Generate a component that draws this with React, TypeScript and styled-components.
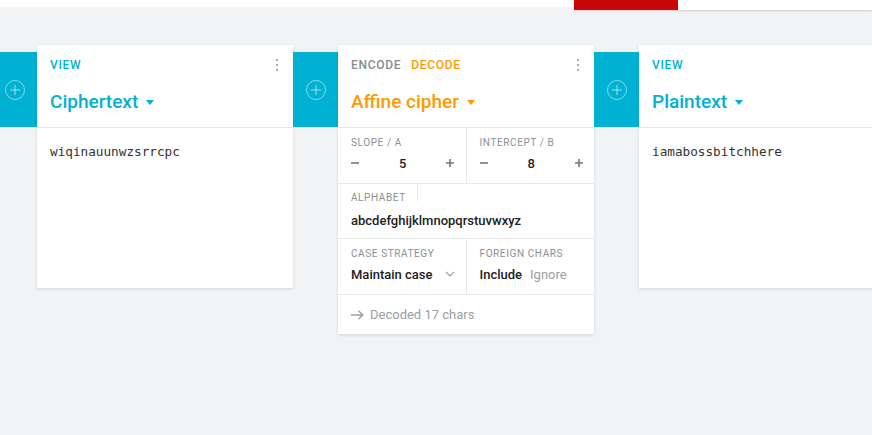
import React from "react";
import styled, { createGlobalStyle } from "styled-components";

const TEAL = "#00b1d3";
const ORANGE = "#ff9a00";
const LINE = "#e6e8ea";

const GlobalStyle = createGlobalStyle`
  html, body { margin: 0; padding: 0; background: #f2f3f5; overflow: hidden; }
  body { font-family: Roboto, "Noto Sans", sans-serif; -webkit-font-smoothing: antialiased; }
`;

const Page = styled.div`
  width: 872px;
  height: 435px;
  overflow: hidden;
  background: #f2f3f5;
  display: flex;
  flex-direction: column;
`;

const TopBar = styled.div`
  height: 7px;
  flex-shrink: 0;
  background: #fff;
  display: flex;
  justify-content: flex-end;
  align-items: flex-start;
  position: relative;
  z-index: 2;
`;

const TopRight = styled.div`
  width: 298px;
  height: 10px;
  background: #fff;
  box-shadow: 0 1px 2px rgba(0, 0, 0, 0.15);
  display: flex;
`;

const RedTab = styled.div`
  width: 104px;
  height: 10px;
  background: #c80606;
`;

const Pipeline = styled.div`
  display: flex;
  align-items: flex-start;
  padding-top: 38px;
  margin-left: -8px;
`;

const Column = styled.div`
  display: flex;
  align-items: flex-start;
  flex-shrink: 0;
`;

const Strip = styled.div`
  width: 45px;
  height: 75px;
  margin-top: 7px;
  background: ${TEAL};
  display: flex;
  align-items: center;
  justify-content: center;
`;

const Card = styled.div`
  width: 256px;
  flex-shrink: 0;
  background: #fff;
  box-shadow: 0 1px 3px rgba(0, 0, 0, 0.13);
`;

const Header = styled.div`
  height: 83px;
  box-sizing: border-box;
  padding: 12px 13px 0;
  border-bottom: 1px solid ${LINE};
`;

const TabsRow = styled.div`
  height: 16px;
  display: flex;
  align-items: center;
  justify-content: space-between;
`;

const Tabs = styled.div`
  display: flex;
  gap: 10px;
`;

const Tab = styled.span<{ $color: string }>`
  font-size: 12px;
  font-weight: 500;
  letter-spacing: 0.7px;
  line-height: 16px;
  color: ${(p) => p.$color};
`;

const Kebab = styled.div`
  display: flex;
  flex-direction: column;
  gap: 2.5px;
  padding-right: 2px;
  span {
    width: 2.5px;
    height: 2.5px;
    border-radius: 50%;
    background: #8a8f94;
  }
`;

const Title = styled.div<{ $color: string }>`
  margin-top: 16px;
  display: flex;
  align-items: center;
  gap: 8px;
  font-size: 19px;
  font-weight: 500;
  line-height: 26px;
  color: ${(p) => p.$color};
`;

const Caret = styled.span<{ $color: string }>`
  width: 0;
  height: 0;
  border-left: 4.5px solid transparent;
  border-right: 4.5px solid transparent;
  border-top: 5px solid ${(p) => p.$color};
`;

const TextBody = styled.div`
  height: 160px;
  box-sizing: border-box;
  padding: 14px 13px;
  font-family: "DejaVu Sans Mono", "Liberation Mono", monospace;
  font-size: 12.7px;
  line-height: 20px;
  color: #333;
`;

const FieldRow = styled.div`
  display: flex;
  border-bottom: 1px solid ${LINE};
`;

const Field = styled.div<{ $divider?: boolean }>`
  flex: 1;
  min-width: 0;
  box-sizing: border-box;
  padding: 9px 11px 10px 13px;
  border-right: ${(p) => (p.$divider ? `1px solid ${LINE}` : "none")};
`;

const Label = styled.div`
  font-size: 10px;
  line-height: 12px;
  letter-spacing: 0.6px;
  color: #8a9095;
`;

const AlphabetField = styled.div`
  height: 55px;
  box-sizing: border-box;
  padding: 0 13px;
  border-bottom: 1px solid ${LINE};
`;

const AlphabetLabel = styled(Label)`
  display: flex;
  align-items: flex-end;
  width: fit-content;
  height: 17px;
  line-height: 7px;
  padding-right: 11px;
  border-right: 1px solid ${LINE};
`;

const Value = styled.div`
  margin-top: 4px;
  height: 20px;
  display: flex;
  align-items: center;
  justify-content: space-between;
  font-size: 13px;
  font-weight: 500;
  color: #222;
`;

const AlphaValue = styled(Value)`
  margin-top: 9px;
  justify-content: flex-start;
`;

const Toggle = styled.div`
  display: flex;
  gap: 8px;
`;

const Option = styled.span<{ $active?: boolean }>`
  color: ${(p) => (p.$active ? "#222" : "#9a9fa4")};
  font-weight: ${(p) => (p.$active ? 500 : 400)};
`;

const Footer = styled.div`
  height: 39px;
  padding: 0 13px;
  display: flex;
  align-items: center;
  gap: 6px;
  font-size: 13px;
  color: #9a9fa4;
`;

const PlusCircle = () => (
  <svg width="22" height="22" viewBox="0 0 22 22" fill="none">
    <circle cx="11" cy="11" r="9.5" stroke="rgba(255,255,255,0.5)" strokeWidth="1" />
    <path d="M11 6v10M6 11h10" stroke="rgba(255,255,255,0.6)" strokeWidth="1" />
  </svg>
);

const Minus = () => (
  <svg width="8" height="8" viewBox="0 0 8 8">
    <path d="M0 4h8" stroke="#777" strokeWidth="1.6" />
  </svg>
);

const Plus = () => (
  <svg width="8" height="8" viewBox="0 0 8 8">
    <path d="M0 4h8M4 0v8" stroke="#777" strokeWidth="1.6" />
  </svg>
);

const Chevron = () => (
  <svg width="10" height="6" viewBox="0 0 10 6" fill="none">
    <path d="M1 1l4 4 4-4" stroke="#9a9fa4" strokeWidth="1.1" />
  </svg>
);

const Arrow = () => (
  <svg width="13" height="10" viewBox="0 0 13 10" fill="none">
    <path d="M0 5h12M7.5 0.7L11.8 5 7.5 9.3" stroke="#9a9fa4" strokeWidth="1.4" />
  </svg>
);

const Dots = () => (
  <Kebab>
    <span />
    <span />
    <span />
  </Kebab>
);

const ViewCard: React.FC<{ title: string; text: string }> = ({ title, text }) => (
  <Column>
    <Strip>
      <PlusCircle />
    </Strip>
    <Card>
      <Header>
        <TabsRow>
          <Tabs>
            <Tab $color={TEAL}>VIEW</Tab>
          </Tabs>
          <Dots />
        </TabsRow>
        <Title $color={TEAL}>
          {title}
          <Caret $color={TEAL} />
        </Title>
      </Header>
      <TextBody>{text}</TextBody>
    </Card>
  </Column>
);

const Stepper: React.FC<{ label: string; value: number; divider?: boolean }> = ({ label, value, divider }) => (
  <Field $divider={divider}>
    <Label>{label}</Label>
    <Value>
      <Minus />
      <span>{value}</span>
      <Plus />
    </Value>
  </Field>
);

export default function App() {
  return (
    <Page>
      <GlobalStyle />
      <TopBar>
        <TopRight>
          <RedTab />
        </TopRight>
      </TopBar>
      <Pipeline>
        <ViewCard title="Ciphertext" text="wiqinauunwzsrrcpc" />
        <Column>
          <Strip>
            <PlusCircle />
          </Strip>
          <Card>
            <Header>
              <TabsRow>
                <Tabs>
                  <Tab $color="#868c91">ENCODE</Tab>
                  <Tab $color={ORANGE}>DECODE</Tab>
                </Tabs>
                <Dots />
              </TabsRow>
              <Title $color={ORANGE}>
                Affine cipher
                <Caret $color={ORANGE} />
              </Title>
            </Header>
            <FieldRow>
              <Stepper label="SLOPE / A" value={5} divider />
              <Stepper label="INTERCEPT / B" value={8} />
            </FieldRow>
            <AlphabetField>
              <AlphabetLabel>ALPHABET</AlphabetLabel>
              <AlphaValue>abcdefghijklmnopqrstuvwxyz</AlphaValue>
            </AlphabetField>
            <FieldRow>
              <Field $divider>
                <Label>CASE STRATEGY</Label>
                <Value>
                  <span>Maintain case</span>
                  <Chevron />
                </Value>
              </Field>
              <Field>
                <Label>FOREIGN CHARS</Label>
                <Value>
                  <Toggle>
                    <Option $active>Include</Option>
                    <Option>Ignore</Option>
                  </Toggle>
                </Value>
              </Field>
            </FieldRow>
            <Footer>
              <Arrow />
              <span>Decoded 17 chars</span>
            </Footer>
          </Card>
        </Column>
        <ViewCard title="Plaintext" text="iamabossbitchhere" />
      </Pipeline>
    </Page>
  );
}
